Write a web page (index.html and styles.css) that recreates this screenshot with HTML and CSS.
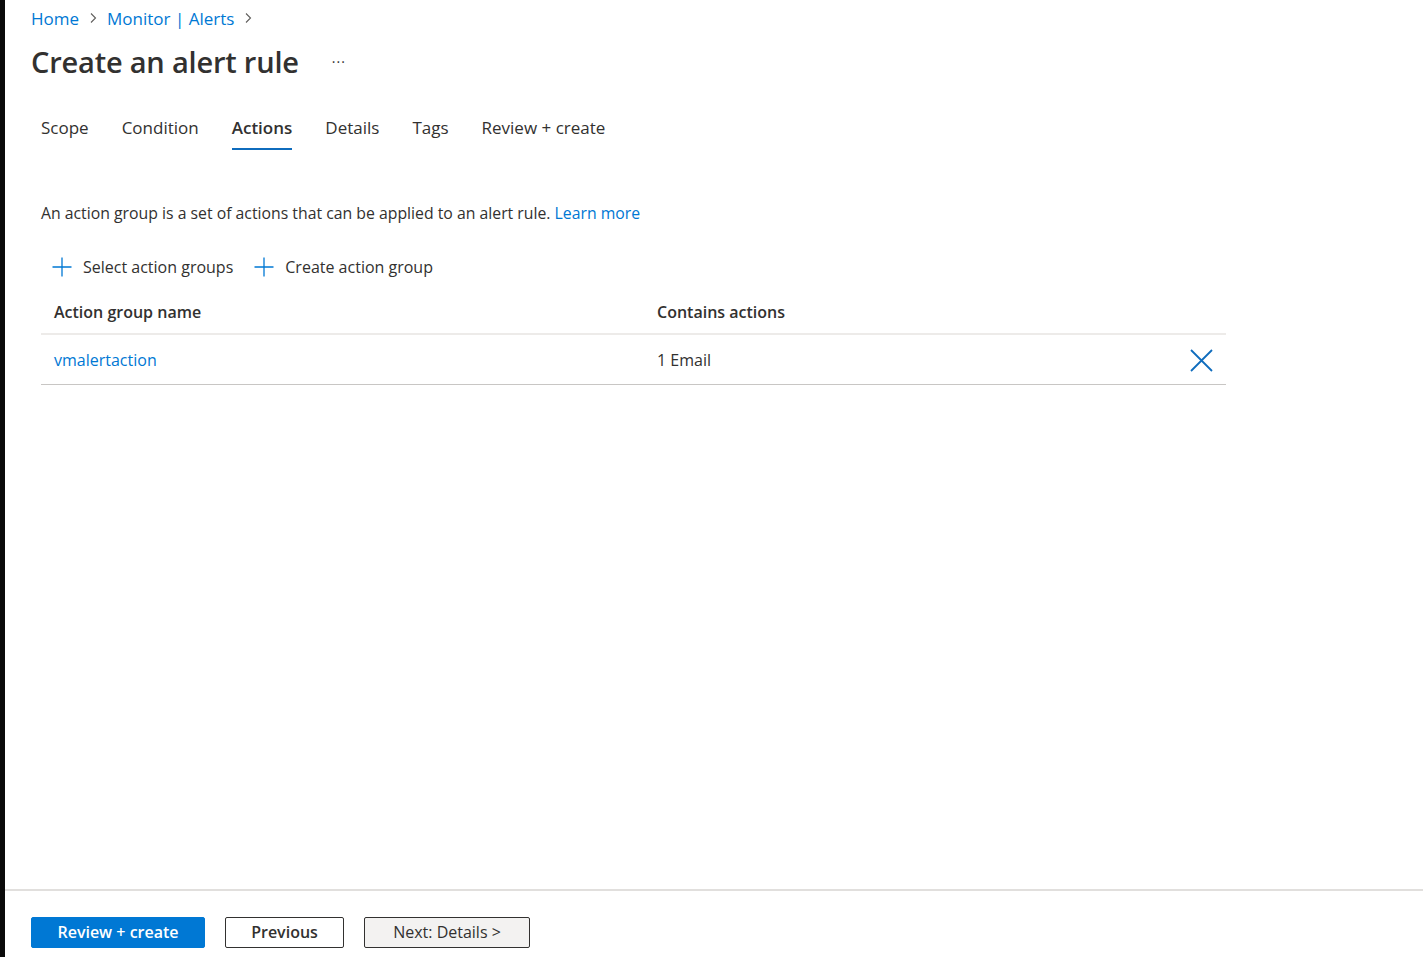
FILE: index.html
```html
<!DOCTYPE html>
<html lang="en">
<head>
<meta charset="utf-8">
<title>Create an alert rule</title>
<link rel="stylesheet" href="styles.css">
</head>
<body>
<div class="edge"></div>
<div class="main">
  <div class="content">
    <nav class="crumbs">
      <a class="crumb">Home</a>
      <span class="chev"><svg width="8" height="12" viewBox="0 0 8 12"><path d="M2 1.5 L6.5 6 L2 10.5" fill="none" stroke="#605e5c" stroke-width="1.1"/></svg></span>
      <a class="crumb">Monitor | Alerts</a>
      <span class="chev"><svg width="8" height="12" viewBox="0 0 8 12"><path d="M2 1.5 L6.5 6 L2 10.5" fill="none" stroke="#605e5c" stroke-width="1.1"/></svg></span>
    </nav>
    <div class="titlebar">
      <h1 class="title">Create an alert rule</h1>
      <span class="more">···</span>
    </div>
    <div class="tabs">
      <span class="tab">Scope</span>
      <span class="tab">Condition</span>
      <span class="tab active">Actions</span>
      <span class="tab">Details</span>
      <span class="tab">Tags</span>
      <span class="tab">Review + create</span>
    </div>
    <p class="desc">An action group is a set of actions that can be applied to an alert rule. <a class="link">Learn more</a></p>
    <div class="cmds">
      <span class="cmd"><svg width="20" height="20" viewBox="0 0 20 20"><path d="M10 0.5 V19.5 M0.5 10 H19.5" stroke="#0078d4" stroke-width="1.3" fill="none"/></svg>Select action groups</span>
      <span class="cmd"><svg width="20" height="20" viewBox="0 0 20 20"><path d="M10 0.5 V19.5 M0.5 10 H19.5" stroke="#0078d4" stroke-width="1.3" fill="none"/></svg>Create action group</span>
    </div>
    <div class="grid">
      <div class="row head">
        <span class="c1">Action group name</span>
        <span class="c2">Contains actions</span>
        <span class="c3"></span>
      </div>
      <div class="row body">
        <a class="c1 link">vmalertaction</a>
        <span class="c2">1 Email</span>
        <span class="c3"><svg width="23" height="23" viewBox="0 0 23 23"><path d="M1 1 L22 22 M22 1 L1 22" stroke="#0f6cbd" stroke-width="1.8" fill="none"/></svg></span>
      </div>
    </div>
  </div>
  <footer class="footer">
    <button class="btn primary">Review + create</button>
    <button class="btn">Previous</button>
    <button class="btn next">Next: Details &gt;</button>
  </footer>
</div>
</body>
</html>
```

FILE: styles.css
```css
* { box-sizing: border-box; }
html, body { margin: 0; padding: 0; }
body {
  display: flex;
  height: 957px;
  background: #ffffff;
  font-family: "Open Sans", "Noto Sans", sans-serif;
  color: #323130;
  overflow: hidden;
}
.edge { width: 5px; background: #0a0a0a; flex: none; }
.main { flex: 1; display: flex; flex-direction: column; }
.content { flex: 1; padding-left: 26px; }
.crumbs {
  display: flex; align-items: center; gap: 0;
  height: 22px; margin-top: 7px;
  font-size: 17px;
}
.crumb { color: #0078d4; }
.chev { display: inline-flex; width: 28px; justify-content: center; }
.titlebar { display: flex; align-items: center; margin-top: 13px; height: 38px; }
.title { margin: 0; font-size: 29px; font-weight: 600; color: #323130; letter-spacing: -0.2px; }
.more { margin-left: 33px; font-size: 14px; color: #323130; letter-spacing: 1px; }
.tabs {
  display: flex; margin-top: 31px; margin-left: 10px; gap: 33px;
  font-size: 17px; height: 39px;
}
.tab { position: relative; padding-top: 5px; height: 39px; color: #323130; }
.tab.active { font-weight: 600; }
.tab.active::after {
  content: ""; position: absolute; left: 0; right: 0; bottom: 0;
  height: 2px; background: #0f6cbd;
}
.desc { margin: 52px 0 0 10px; font-size: 15.8px; }
.link { color: #0078d4; }
.cmds { display: flex; margin: 32px 0 0 21px; gap: 21px; font-size: 16px; }
.cmd { display: inline-flex; align-items: center; gap: 11px; }
.grid { margin: 13px 0 0 10px; width: 1185px; }
.row { display: flex; align-items: center; padding-left: 13px; font-size: 16px; }
.row.head { height: 44px; font-weight: 600; border-bottom: 2px solid #edebe9; }
.row.body { height: 50px; padding-top: 1px; border-bottom: 1px solid #c8c6c4; }
.c1 { width: 603px; }
.c2 { flex: 1; }
.c3 { width: 36px; display: flex; align-items: center; }
.footer {
  height: 68px; border-top: 2px solid #e1dfdd;
  display: flex; align-items: center; padding-left: 26px; gap: 20px;
  padding-top: 16px;
}
.btn {
  height: 31px; font-family: inherit; font-size: 16px; font-weight: 600;
  border: 1px solid #323130; background: #fff; color: #323130;
  border-radius: 2px; padding: 0; width: 119px;
}
.btn.primary { background: #0078d4; border-color: #0078d4; color: #fff; width: 174px; }
.btn.next { background: #f3f2f1; width: 166px; font-weight: 400; }
```
